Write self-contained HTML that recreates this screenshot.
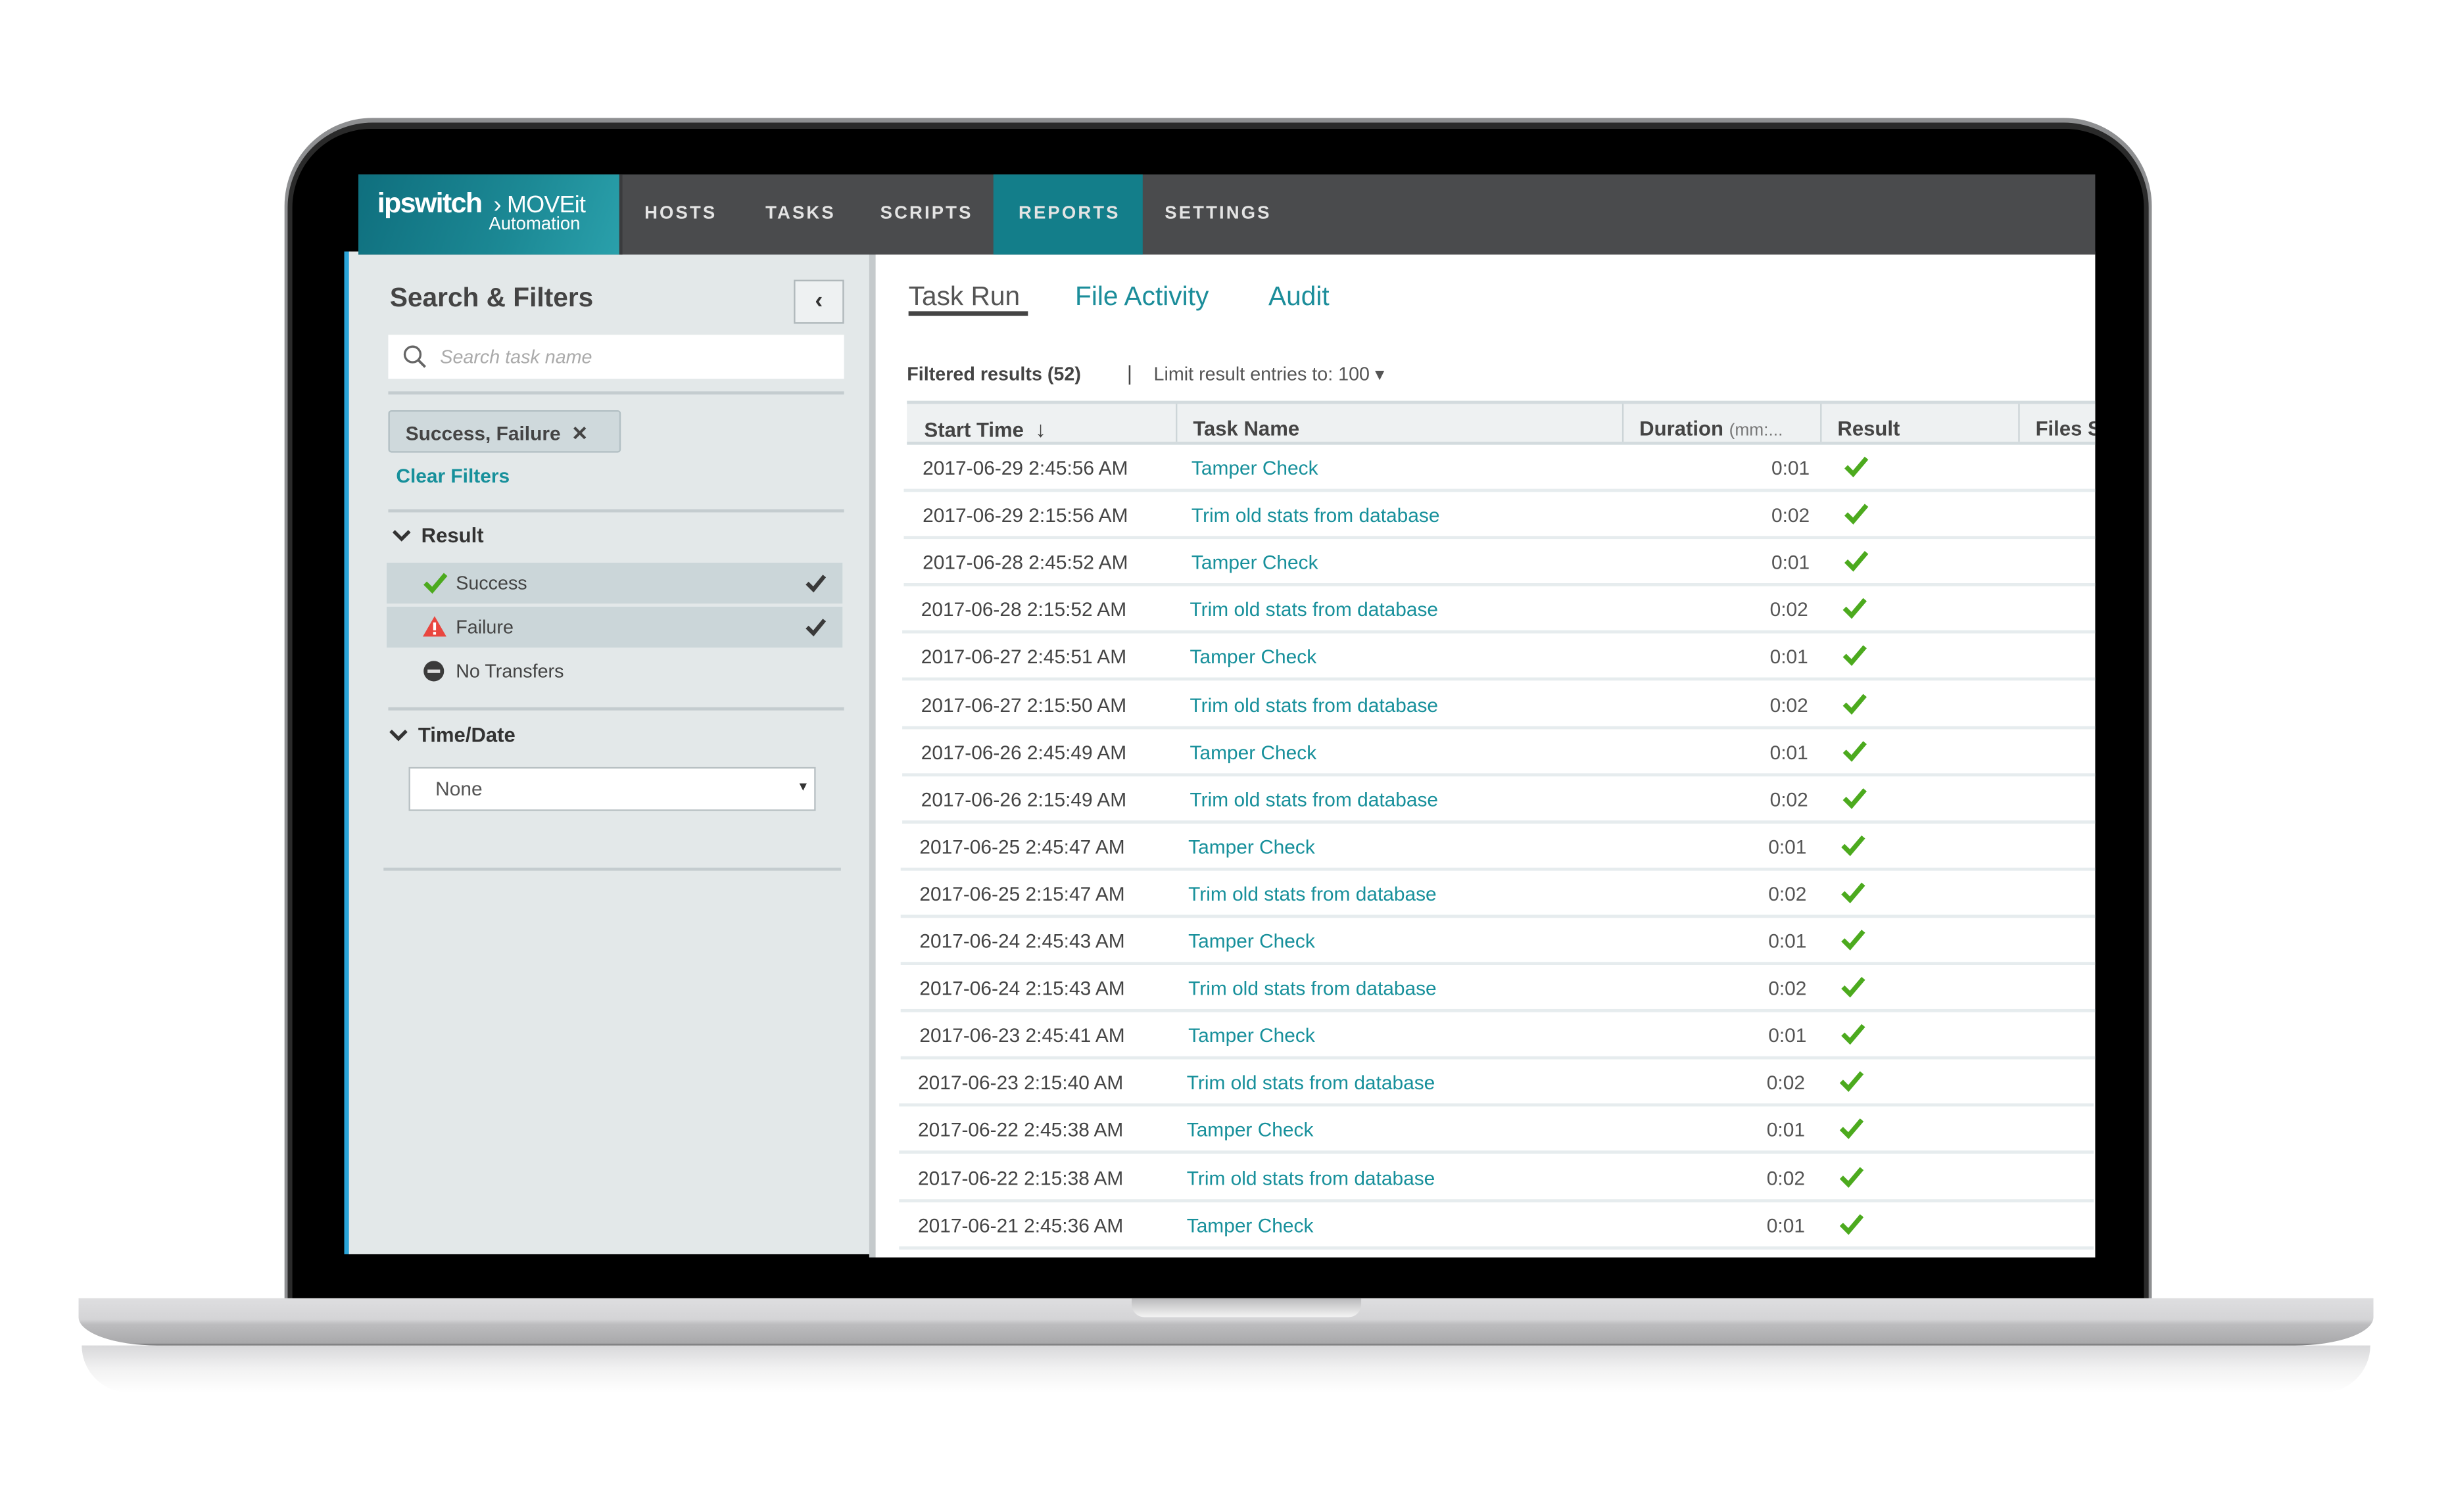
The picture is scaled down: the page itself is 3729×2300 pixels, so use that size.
<!DOCTYPE html>
<html><head><meta charset="utf-8">
<style>
*{margin:0;padding:0;box-sizing:border-box}
html,body{width:3729px;height:2300px;overflow:hidden;background:#fff}
#s{position:absolute;left:0;top:0;width:1560px;height:962px;transform:scale(2.3904,2.3909);transform-origin:0 0;font-family:"Liberation Sans",sans-serif}
.a{position:absolute}
.nav{color:#e4e4e4;font-size:11.5px;font-weight:bold;letter-spacing:1.3px;top:130px}
.hr{position:absolute;height:2px;background:#c4cccf}
.row{position:absolute;left:575px;width:760px;height:30px;border-bottom:2px solid #e6ecee}
.row span{position:absolute;top:8px;font-size:12.5px;white-space:nowrap}
.d{left:12px;color:#444}
.t{left:183px;color:#17909b}
.u{left:552px;color:#555}
.c{left:598px;top:7px!important}
.th{position:absolute;top:8px;font-size:13px;font-weight:bold;color:#444;white-space:nowrap}
</style></head><body><div id="s">
<div class="a" style="left:52px;top:856px;width:1456px;height:30px;border-radius:0 0 40px 40px;background:linear-gradient(#d8d8da,#f2f2f2 50%,#fff)"></div>
<div class="a" style="left:181px;top:75px;width:1188px;height:770px;border-radius:56px 56px 0 0;background:#8e8f91"></div>
<div class="a" style="left:183px;top:78px;width:1184px;height:770px;border-radius:54px 54px 0 0;background:#2a2a2a"></div>
<div class="a" style="left:186px;top:82px;width:1178px;height:770px;border-radius:50px 50px 0 0;background:#000"></div>
<div class="a" style="left:50px;top:826px;width:1460px;height:30px;border-radius:0 0 50px 50px / 0 0 18px 18px;background:linear-gradient(#dedee0,#d4d4d6 45%,#bdbdbf 55%,#a9a9ab 95%,#6b6b6d)"></div>
<div class="a" style="left:720px;top:826px;width:146px;height:12px;border-radius:0 0 8px 8px;background:linear-gradient(#b9b9bb,#f4f4f4)"></div>
<div class="a" style="left:219px;top:160px;width:4px;height:638px;background:#2aa4d8"></div>
<div class="a" style="left:222px;top:160px;width:332px;height:638px;background:#e3e8e9"></div>
<div class="a" style="left:553px;top:160px;width:4px;height:640px;background:#c5cacc"></div>
<div class="a" style="left:557px;top:160px;width:776px;height:640px;background:#fff;overflow:hidden">
<div id="rows"></div>
</div>
<div class="a" style="left:228px;top:111px;width:1105px;height:51px;background:#4a4b4d"></div>
<div class="a" style="left:228px;top:111px;width:166px;height:51px;background:linear-gradient(110deg,#0f6f7e,#1c8995 60%,#2aa0ab)"></div>
<div class="a" style="left:394px;top:111px;width:2px;height:51px;background:#3a3b3d"></div>
<div class="a" style="left:632px;top:111px;width:95px;height:51px;background:#137e8a"></div>
<div class="a" style="left:240px;top:119px;color:#fff;font-size:18px;font-weight:bold;letter-spacing:-0.7px">ipswitch</div>
<div class="a" style="left:314px;top:122px;color:#fff;font-size:15px;letter-spacing:-0.3px">› MOVEit</div>
<div class="a" style="left:311px;top:137px;color:#fff;font-size:11.5px">Automation</div>
<div class="a nav" style="left:410px">HOSTS</div>
<div class="a nav" style="left:487px">TASKS</div>
<div class="a nav" style="left:560px">SCRIPTS</div>
<div class="a nav" style="left:648px">REPORTS</div>
<div class="a nav" style="left:741px">SETTINGS</div>
<div class="a" style="left:248px;top:180px;font-size:17px;font-weight:bold;color:#444">Search &amp; Filters</div>
<div class="a" style="left:505px;top:178px;width:32px;height:28px;border:1px solid #b0b8bb;background:#eef1f2;color:#333;font-size:15px;font-weight:bold;text-align:center;line-height:26px">‹</div>
<div class="a" style="left:247px;top:213px;width:290px;height:28px;background:#fff"></div>
<svg class="a" style="left:256px;top:219px" width="16" height="16" viewBox="0 0 16 16"><circle cx="6.5" cy="6.5" r="5" fill="none" stroke="#666" stroke-width="1.4"/><path d="M10 10l4.5 4.5" stroke="#666" stroke-width="1.6"/></svg>
<div class="a" style="left:280px;top:220px;font-size:12px;font-style:italic;color:#aaa">Search task name</div>
<div class="hr" style="left:247px;top:249px;width:290px"></div>
<div class="a" style="left:247px;top:261px;width:148px;height:27px;border:1px solid #b3c0c4;background:#cfd9dc;border-radius:2px"></div>
<div class="a" style="left:258px;top:268px;font-size:12.5px;font-weight:bold;color:#444">Success, Failure &nbsp;✕</div>
<div class="a" style="left:252px;top:296px;font-size:12.5px;font-weight:bold;color:#17909b">Clear Filters</div>
<div class="hr" style="left:247px;top:324px;width:290px"></div>
<svg class="a" style="left:249px;top:336px" width="13" height="10"><path d="M1.5 2l5 5 5-5" fill="none" stroke="#333" stroke-width="2.2"/></svg>
<div class="a" style="left:268px;top:333px;font-size:13px;font-weight:bold;color:#333">Result</div>
<div class="a" style="left:246px;top:358px;width:290px;height:26px;background:#cbd6d9"></div>
<div class="a" style="left:246px;top:386px;width:290px;height:26px;background:#cbd6d9"></div>
<svg class="a" style="left:269px;top:364px" width="16" height="14"><path d="M1.5 7l4.5 4.5 8.5-10" fill="none" stroke="#4caa1e" stroke-width="3"/></svg>
<div class="a" style="left:290px;top:364px;font-size:12px;color:#444">Success</div>
<svg class="a" style="left:268px;top:391px" width="17" height="15"><path d="M8.5 1L16 14H1z" fill="#e9463f"/><rect x="7.6" y="5" width="1.8" height="5" fill="#fff"/><rect x="7.6" y="11" width="1.8" height="1.8" fill="#fff"/></svg>
<div class="a" style="left:290px;top:392px;font-size:12px;color:#444">Failure</div>
<svg class="a" style="left:512px;top:365px" width="14" height="12"><path d="M1.5 6l4 4 7-8.5" fill="none" stroke="#3a3a3a" stroke-width="2.6"/></svg>
<svg class="a" style="left:512px;top:393px" width="14" height="12"><path d="M1.5 6l4 4 7-8.5" fill="none" stroke="#3a3a3a" stroke-width="2.6"/></svg>
<svg class="a" style="left:269px;top:420px" width="14" height="14"><circle cx="7" cy="7" r="6.5" fill="#3b3b3b"/><rect x="3" y="6" width="8" height="2.2" fill="#ddd"/></svg>
<div class="a" style="left:290px;top:420px;font-size:12px;color:#444">No Transfers</div>
<div class="hr" style="left:247px;top:450px;width:290px"></div>
<svg class="a" style="left:247px;top:463px" width="13" height="10"><path d="M1.5 2l5 5 5-5" fill="none" stroke="#333" stroke-width="2.2"/></svg>
<div class="a" style="left:266px;top:460px;font-size:13px;font-weight:bold;color:#333">Time/Date</div>
<div class="a" style="left:260px;top:488px;width:259px;height:28px;background:#fff;border:1px solid #b8c0c3"></div>
<div class="a" style="left:277px;top:495px;font-size:12.5px;color:#555">None</div>
<div class="a" style="left:507px;top:496px;font-size:8px;color:#333">▼</div>
<div class="hr" style="left:244px;top:552px;width:291px"></div>
<div class="a" style="left:578px;top:179px;font-size:17px;color:#555">Task Run</div>
<div class="a" style="left:578px;top:198px;width:76px;height:3px;background:#444"></div>
<div class="a" style="left:684px;top:179px;font-size:17px;color:#1b8d9a">File Activity</div>
<div class="a" style="left:807px;top:179px;font-size:17px;color:#1b8d9a">Audit</div>
<div class="a" style="left:577px;top:231px;font-size:12px;font-weight:bold;color:#444">Filtered results (52)</div>
<div class="a" style="left:717px;top:230px;font-size:13px;color:#444">|</div>
<div class="a" style="left:734px;top:231px;font-size:12px;color:#555">Limit result entries to: 100 ▾</div>
<div class="a" style="left:577px;top:255px;width:756px;height:28px;background:#eef1f2;border-top:2px solid #d3dbde;border-bottom:2px solid #d3dbde;overflow:hidden">
<div class="a" style="left:171px;top:0;width:1px;height:26px;background:#cdd5d8"></div>
<div class="a" style="left:455px;top:0;width:1px;height:26px;background:#cdd5d8"></div>
<div class="a" style="left:581px;top:0;width:1px;height:26px;background:#cdd5d8"></div>
<div class="a" style="left:707px;top:0;width:1px;height:26px;background:#cdd5d8"></div>
<span class="th" style="left:11px">Start Time &nbsp;<b style="font-size:14px">↓</b></span>
<span class="th" style="left:182px">Task Name</span>
<span class="th" style="left:466px">Duration <span style="font-weight:normal;font-size:11px;color:#777">(mm:...</span></span>
<span class="th" style="left:592px">Result</span>
<span class="th" style="left:718px">Files S</span>
</div>
</div>
<script>
var d=[["2017-06-29 2:45:56 AM",0],["2017-06-29 2:15:56 AM",1],["2017-06-28 2:45:52 AM",0],["2017-06-28 2:15:52 AM",1],["2017-06-27 2:45:51 AM",0],["2017-06-27 2:15:50 AM",1],["2017-06-26 2:45:49 AM",0],["2017-06-26 2:15:49 AM",1],["2017-06-25 2:45:47 AM",0],["2017-06-25 2:15:47 AM",1],["2017-06-24 2:45:43 AM",0],["2017-06-24 2:15:43 AM",1],["2017-06-23 2:45:41 AM",0],["2017-06-23 2:15:40 AM",1],["2017-06-22 2:45:38 AM",0],["2017-06-22 2:15:38 AM",1],["2017-06-21 2:45:36 AM",0]];
var h="";d.forEach(function(r,i){var y=283+i*30.1-160;var dx=-Math.round(i*0.2);
h+='<div class="row" style="top:'+y+'px;left:'+(18+dx)+'px"><span class="d">'+r[0]+'</span><span class="t">'+(r[1]?'Trim old stats from database':'Tamper Check')+'</span><span class="u">0:0'+(r[1]?2:1)+'</span><span class="c"><svg width="16" height="14"><path d="M1.5 7l4.5 4.5 8.5-10" fill="none" stroke="#4caa1e" stroke-width="3"/></svg></span></div>';});
document.getElementById("rows").innerHTML=h;
</script>
</body></html>
